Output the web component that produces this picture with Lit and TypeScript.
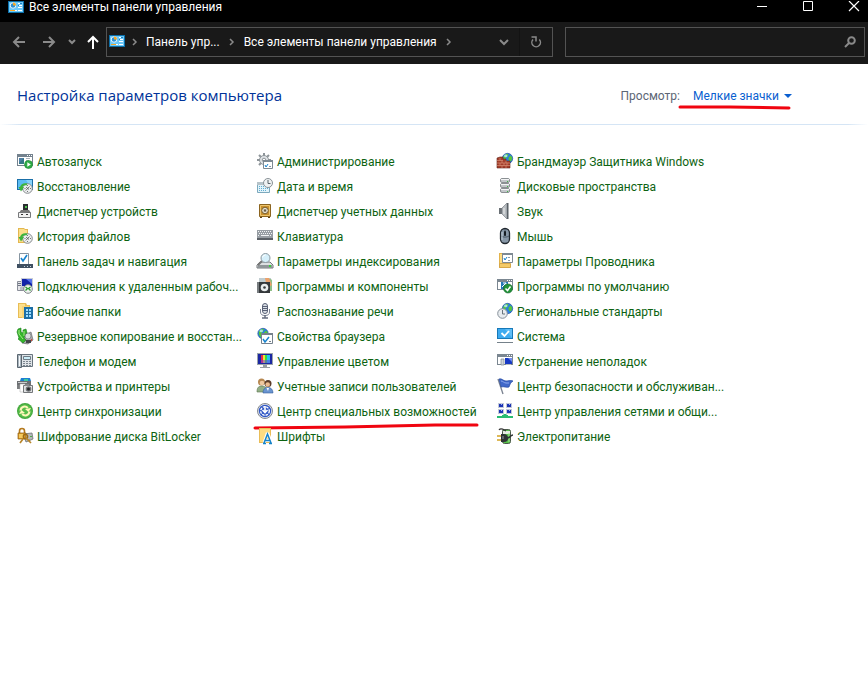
import { LitElement, html, svg, css, type SVGTemplateResult } from "lit";
import { customElement, property } from "lit/decorators.js";

const gear = svg`
  <g fill="none" stroke="#8d9499" stroke-width="2"><path d="M7 0v3M7 11v3M0 7h3M11 7h3M2 2l2 2M12 2l-2 2M2 12l2-2"/></g>
  <circle cx="7" cy="7" r="4.500" fill="#dfe3e6" stroke="#8d9499"/><circle cx="7" cy="7" r="1.800" fill="#fff" stroke="#8d9499"/>`;

const globe = (cx: number, cy: number, r: number) => svg`
  <circle cx=${cx} cy=${cy} r=${r} fill="#2b7fe0" stroke="#174a96" stroke-width=".6"/>
  <path transform="translate(${cx} ${cy}) scale(${r / 5})" fill="#54c83c" d="M-4-2-1-4.5 1-4 0-2-2 0-1 2-2 4-4 1ZM1-1 3-3 4.5-1 4 2 2 3 1 1Z"/>
  <ellipse cx=${cx - r / 3} cy=${cy - r / 2} rx=${r / 3} ry=${r / 4} fill="#bfeaff" opacity=".8"/>`;

const historyClock = svg`
  <circle cx="10.5" cy="10.5" r="4.8" fill="#eceff0" stroke="#858a8d"/>
  <path d="M10.5 7v1M10.5 13v1M7.5 10.5h1M13 10.5h1M8.7 12.5l3.8-4M9 9l3 2.5" stroke="#555" stroke-width=".8" fill="none"/>
  <path d="M10 6.5C6 5.500 4 8 4 10" stroke="#3db43c" stroke-width="2.200" fill="none"/><path d="M1.500 9h5.500l-3 4.500z" fill="#3db43c"/>`;

const plainWindow = svg`
  <path d="M0 1h16v11H0z" fill="#7b8791"/><path d="M1 4h14v7H1z" fill="#fff"/>
  <path d="M10 2h1v1h-1zM12 2h1v1h-1zM14 2h1v1h-1z" fill="#fff"/>`;

const icons: Record<string, SVGTemplateResult> = {
  panel: svg`
    <path d="M0 1h16v12H0z" fill="#0b6ea8"/><path d="M1 2h14v10H1z" fill="#6cc8f8"/>
    <circle cx="5" cy="5.500" r="3" fill="#fff"/><circle cx="5" cy="5.500" r="2.300" fill="#2a8fd4"/><path d="M5 5.500V2.500a3 3 0 0 1 3 3z" fill="#f6a623"/>
    <path d="M10 3h4v1h-4zM11 5h3v1h-3zM10 7h4v1h-4zM10 10h4v1h-4z" fill="#fff"/><path d="M12 3h2v1h-2zM10 5h1v1h-1z" fill="#1c7fc0"/>
    <path d="M2 10h5v1H2z" fill="#f6a623"/><path d="M7 10h2v1H7z" fill="#fff"/>`,
  autoplay: svg`
    <path d="M0 1h16v12H0z" fill="#74828e"/><path d="M1 4h14v8H1z" fill="#fff"/>
    <path d="M10 2h1v1h-1zM12 2h1v1h-1zM14 2h1v1h-1z" fill="#fff"/>
    <path d="M2 5h5v6H2z" fill="#347986"/><path d="M2 5h5L2 10z" fill="#507fa5"/>
    <path d="M9 5.500h4M9 7.500h3" stroke="#aab2b9"/>
    <circle cx="11.500" cy="11.500" r="4" fill="#2fae46" stroke="#1d8132" stroke-width=".6"/><path d="M10.300 9.300v4.400l3.500-2.200z" fill="#fff"/>`,
  recovery: svg`
    <path d="M0 1h16v11H0z" fill="#1a6fa8"/><path d="M1 2h14v9H1z" fill="#5bbcf3"/><path d="M9 2h6v9z" fill="#86d2fa"/>${historyClock}`,
  device: svg`
    <path d="M6 1h5v7H6z" fill="#2b2e30"/><path d="M8 3h2v2H8z" fill="#53c653"/>
    <path d="M4 7h8l2 3H2z" fill="#777"/><path d="M1.500 9.500h12v5h-12z" fill="#f1f1f1" stroke="#77797b"/>
    <path d="M4 11h2v1H4zM9 11h2v1H9z" fill="#333"/>`,
  history: svg`
    <path d="M1 0h6l1 1h3v14H1z" fill="#e3b750"/><path d="M2 1h5l1 1h2v12H2z" fill="#fbdf8a"/>${historyClock}`,
  taskbar: svg`
    <path d="M2.500.5h9v12h-9z" fill="#fff" stroke="#8795a1"/><path d="M0 11h16v4H0z" fill="#3f5062"/>
    <path d="M7 13h1v1H7zM10 13h1v1h-1zM13 13h1v1h-1z" fill="#c4d0da"/>
    <path d="M4 5l2 3 4-6" fill="none" stroke="#1683cf" stroke-width="1.600"/>`,
  remote: svg`
    <path d="M.5 3.500h6v9h-6z" fill="#e4e4e8" stroke="#8a8f99"/><path d="M1 5.500h3M1 7.500h3" stroke="#6d7482"/>
    <path d="M4 0h12v9H4z" fill="#c8ccd6"/><path d="M5 1h10v7H5z" fill="#1223a8"/><path d="M9 1h6v5z" fill="#5673e8"/>
    <path d="M3 9h7v3H3z" fill="#b9bdc8"/>
    <circle cx="11" cy="11" r="4.300" fill="#eef2ee" stroke="#80868a"/><path d="M8.500 9l2 1.500-2 2M13.500 9l-2 1.500 2 2" fill="none" stroke="#299b31" stroke-width="1.300"/>`,
  workfolders: svg`
    <path d="M1 0h8l1 2h3v13H1z" fill="#e8bd56"/><path d="M2 1h6v13H2z" fill="#fde08b"/><path d="M5 3h7v12H5z" fill="#f8d477"/>
    <path d="M7 4h9v12H7z" fill="#1c6ea5"/><path d="M9 6h2v2H9zM12 6h2v2h-2zM9 9h2v2H9zM12 9h2v2h-2zM9 12h2v2H9zM12 12h2v2h-2z" fill="#9bdcff"/>`,
  backup: svg`
    <path d="M6 8l8-4 2 8-5 4-6-1z" fill="#a8abad" stroke="#696c6e" stroke-width=".7"/><circle cx="11" cy="8" r="3" fill="#d9dcde" stroke="#77797b" stroke-width=".7"/>
    <path d="M9 12h5v3H9z" fill="#44474a"/><path d="M14 11h1v2h-1z" fill="#d74439"/>
    <path d="M1 1l3-1v4l2 1V2l3-1 1 4-2 1-1 4 2 2-3 3-5-4 1-1L1 7 0 4z" fill="#35b52c" stroke="#187a17" stroke-width=".6"/><path d="M2 2v4l4 5M7 3v5" stroke="#a4ed84" fill="none"/>`,
  phone: svg`
    <path d="M1.500 1.500h14v12h-14z" fill="#dfe4e8" stroke="#68747e"/><path d="M.5 1.500h4v13h-4z" fill="#a9b5be" stroke="#5a6670"/><path d="M2.500 3v10" stroke="#f5f8fa"/>
    <path d="M6.500 3.500h7v3h-7z" fill="#c9edf8" stroke="#6e7b85"/>
    <path d="M6 8.500h2M9 8.500h2M12 8.500h2M6 10.500h2M9 10.500h2M12 10.500h2M6 12.500h2M9 12.500h2M12 12.500h2" stroke="#7b858f"/>`,
  printers: svg`
    <path d="M4 0h9l1 3H3z" fill="#1d80d2"/><path d="M7 1h4v2H7z" fill="#40cb9a"/>
    <path d="M0 3h14v5H0z" fill="#6c6f72"/><path d="M1 4h9v1H1z" fill="#c8cbcd"/><path d="M0 7h3v4H0z" fill="#7b7e80"/><path d="M3 6h5v8H3z" fill="#fff" stroke="#aaa" stroke-width=".5"/>
    <path d="M6.500 7.500h9v7h-9z" fill="#dfe1e2" stroke="#74777a"/><path d="M8 6h4v2H8z" fill="#85888a"/><circle cx="11.500" cy="11" r="2.800" fill="#737679"/><circle cx="11.500" cy="11" r="1.500" fill="#26292c"/>`,
  sync: svg`
    <circle cx="8" cy="8" r="8" fill="#43a83c"/><circle cx="8" cy="8" r="6.800" fill="#58bd4b"/>
    <path d="M3.500 7.500C4 3.500 8.500 2.500 10.800 5M12.500 8.500C12 12.500 7.500 13.500 5.200 11" fill="none" stroke="#fff7ba" stroke-width="2"/>
    <path d="M14 5l-2.500 4L8 6zM2 11l2.500-4L8 10z" fill="#fff7ba"/>`,
  bitlocker: svg`
    <path d="M6 6l9-1 1 6-7 3z" fill="#b5b8bb" stroke="#6f7274" stroke-width=".8"/><path d="M13 8h2v1h-2z" fill="#4ca94a"/>
    <path d="M2.500 5V3a2.500 2.500 0 0 1 5 0v3" fill="none" stroke="#b57a1e" stroke-width="1.600"/>
    <path d="M1 5h8v6H1z" fill="#d99a28" stroke="#8c5d11" stroke-width=".7"/><path d="M2 6h4v4H2z" fill="#f5c95c"/>
    <circle cx="8.500" cy="8.500" r="2.200" fill="none" stroke="#9a6a16" stroke-width="1.300"/><path d="M9 10l5 5M6 11l-3 4M11 13l2-1" stroke="#b8862a" stroke-width="1.700"/>`,
  admin: svg`
    ${gear}<path d="M6.500 7.500h9v8h-9z" fill="#fff" stroke="#7d8993"/><path d="M6 7h10v2H6z" fill="#7d8993"/>
    <path d="M8 12l1 2 2-3" fill="none" stroke="#1683cf"/><path d="M12 13.500h2" stroke="#89a"/>`,
  date: svg`
    <path d="M.5 4.500h12v10H.5z" fill="#e2f3fa" stroke="#7ca9bd"/><path d="M0 4h13v3H0z" fill="#b6c3c9"/>
    <path d="M2 8.500h9M2 10.500h9M2 12.500h8" stroke="#61aed2" stroke-dasharray="1 1"/>
    <circle cx="11" cy="5" r="4.500" fill="#eef1f2" stroke="#899297"/><path d="M11 2v3.500h2.500" fill="none" stroke="#59646a"/>`,
  vault: svg`
    <path d="M2.500 1.500h11v12h-11z" fill="#c9902d" stroke="#8b6420"/><path d="M3.500 2.500h9v10h-9z" fill="none" stroke="#edc56d"/>
    <circle cx="8" cy="7.500" r="3.300" fill="#e9e3d2" stroke="#7a5d27"/><circle cx="8" cy="7.500" r="1.200" fill="#665b46"/><path d="M5.500 5l1.500 1.500M10.500 5 9 6.500M5.500 10 7 8.500M10.500 10 9 8.500" stroke="#8b7a57" stroke-width=".7"/>
    <path d="M3 14h2v1H3zM11 14h2v1h-2z" fill="#5c3f10"/>`,
  keyboard: svg`
    <path d="M0 2h16v10H0z" fill="#5b6066"/><path d="M0 2h16v8H0z" fill="#979da3"/>
    <path d="M1 3.500h14M2 5.500h13M1 7.500h2M13 7.500h2" stroke="#f2f4f5" stroke-dasharray="1 1"/><path d="M4 7.500h8" stroke="#f2f4f5"/>`,
  index: svg`
    <path d="M3 9h10l3 3v3H0v-3z" fill="#dcdfe1" stroke="#72777a"/><path d="M1 12h14v3H1z" fill="#8f9598"/><path d="M12 12h2v2h-2z" fill="#39d43a"/>
    <path d="M5 8l-4 4" stroke="#777" stroke-width="2"/><circle cx="8.500" cy="5" r="4.500" fill="#d5effa" stroke="#8b979e"/><path d="M5.500 4.500a3 3 0 0 1 3-2.500" fill="none" stroke="#fff"/>`,
  programs: svg`
    <path d="M2 0h12v8H2z" fill="#c0ccd0"/><path d="M9 1c4-1 7 0 6 3v9h-5z" fill="#8fbf88"/><path d="M8 0h4l3 7-5 3z" fill="#eba16b"/>
    <path d="M0 4h13v11H0z" fill="#34383b"/><path d="M0 4h2v11H0z" fill="#777c7f"/><circle cx="7.500" cy="9.500" r="3.800" fill="#e9eced"/><circle cx="7.500" cy="9.500" r="1.300" fill="#35393c"/>`,
  speech: svg`
    <rect x="5.500" y=".5" width="5" height="10" rx="2.500" fill="#d9dee5" stroke="#596176"/><path d="M6 3.500h4M6 5.500h4M6 7.500h4" stroke="#596176"/>
    <path d="M3.500 6v3a4.500 3.500 0 0 0 9 0V6" fill="none" stroke="#7a8294"/><path d="M8 12v3M5 15h6" stroke="#666e80" stroke-width="1.500"/>`,
  browser: svg`
    ${globe(6, 5.5, 5.2)}<path d="M4.500 5.500h11v10h-11z" fill="#fff" stroke="#75818c"/><path d="M4 5h12v2H4z" fill="#75818c"/><path d="M6 11l2 3 4-5" fill="none" stroke="#1683cf" stroke-width="1.500"/><path d="M12 13.500h2" stroke="#75818c"/>`,
  color: svg`
    <path d="M0 0h16v12H0z" fill="#9ba3a9"/><path d="M1 1h14v10H1z" fill="#1b27a2"/>
    <path d="M4 2h3v8H4z" fill="#e72d48"/><path d="M6 2h2v8H6z" fill="#efe637"/><path d="M8 2h2v8H8z" fill="#33db42"/><path d="M10 2h3v8h-3z" fill="#20c8ec"/><path d="M4 7h9v3H4z" fill="#7033e2" opacity=".5"/>
    <path d="M6 12h4v2h3v1H3v-1h3z" fill="#969ea3"/>`,
  users: svg`
    <circle cx="4.500" cy="4" r="3.500" fill="#b68750"/><circle cx="5" cy="5" r="2.300" fill="#f0c9a0"/><path d="M0 14c0-5 2-6 5-6s5 2 5 6z" fill="#91ae86" stroke="#5a744f" stroke-width=".6"/>
    <circle cx="11" cy="5.500" r="3.500" fill="#5b3c29"/><circle cx="10.700" cy="6.500" r="2.300" fill="#edbd91"/><path d="M6 15c0-4 2-5.500 5-5.500s5 2 5 5.500z" fill="#6994d0" stroke="#355f9b" stroke-width=".6"/><path d="M9.500 10h2.500l-1 3z" fill="#fff"/>`,
  access: svg`
    <circle cx="8" cy="8" r="7.500" fill="#dfe4ef" stroke="#85898f"/><circle cx="8" cy="8" r="6.200" fill="#3158c5"/>
    <circle cx="8" cy="8" r="4.300" fill="none" stroke="#fff" stroke-width="1.300" stroke-dasharray="2.500 1"/><path d="M8 3v6M5.500 7 8 9.500 10.500 7" fill="none" stroke="#fff" stroke-width="1.600"/>`,
  fonts: svg`
    <path d="M2 0h12v15H2z" fill="#e9bd58"/><path d="M3 1h10v13H3z" fill="#ffdc80"/><path d="M7 15 10 6h1l4 9M8 12.500h5" fill="none" stroke="#fff" stroke-width="3"/>
    <path d="M7 15 10.500 6 14 15M8 12.500h5M6 15.500h3M12 15.500h3" fill="none" stroke="#1683c9" stroke-width="1.500"/>`,
  firewall: svg`
    ${globe(10.500, 5.500, 5.2)}<path d="M0 5l3-1h3v2h3v2h4v7H0z" fill="#a43e2b" stroke="#63251b" stroke-width=".6"/>
    <path d="M0 7.500h6M0 10h13M0 12.500h13M3 5v2.500M5 7.500V10M9 7.500V10M3 10v2.500M7 10v2.500M10 10v2.500M5 12.500V15M9 12.500V15" stroke="#df9c82" stroke-width=".6" fill="none"/>`,
  disks: svg`
    ${[0, 5, 10].map((y) => svg`
      <rect x="3.500" y=${y + 0.5} width="9" height="4" rx="1.500" fill="#c3c7ca" stroke="#8b9093"/><path d="M4 ${y + 1.5}h8" stroke="#f3f4f5"/><path d="M10 ${y + 3}h1v1h-1z" fill="#3fbb44"/>`)}`,
  sound: svg`
    <path d="M2 5h3v6H2z" fill="#6a7075"/><path d="M5 5l5-5v16l-5-5z" fill="#b9bec2" stroke="#7c8388" stroke-width=".7"/><path d="M10 0h1.500v16H10z" fill="#596066"/><path d="M7 5v6" stroke="#eee"/>`,
  mouse: svg`
    <rect x="3.500" y=".5" width="9" height="15" rx="4.500" fill="#8797a7" stroke="#20272e" stroke-width="1.300"/><path d="M8 1v7M4 8c2 1.500 6 1.500 8 0" stroke="#4c5966" fill="none"/><rect x="7" y="3" width="2" height="5" rx="1" fill="#161c22"/><path d="M5 4v8" stroke="#c5d1dc"/>`,
  explorer: svg`
    <path d="M2 0h5v15H2z" fill="#e3b34b"/><path d="M3 1h10v13H3z" fill="#ffdc80"/><path d="M2.500 10.500h11v4h-11z" fill="#f4ca68" stroke="#d6a748"/>
    <path d="M5.500.5h10v9h-10z" fill="#fff" stroke="#7d8993"/><path d="M5 1h11" stroke="#7d8993" stroke-width="2"/><path d="M7 5l1 2 2-3" fill="none" stroke="#1683cf"/><path d="M11 4.500h2M11 7.500h2" stroke="#89a"/>`,
  defaults: svg`
    ${plainWindow}<path d="M4 4h7v7H4z" fill="#2678b8"/><path d="M9 5 5 9M6 5h3v3" stroke="#fff" fill="none"/>
    <circle cx="11" cy="10.500" r="4.500" fill="#23933a" stroke="#12652a" stroke-width=".6"/><path d="M8.500 10.500l2 2 3-4" fill="none" stroke="#fff" stroke-width="1.500"/>`,
  region: svg`
    ${globe(10.500, 5.500, 5.2)}<circle cx="5.500" cy="10.500" r="4.800" fill="#e8ecef" stroke="#858f98"/><path d="M5.500 7v4H8" fill="none" stroke="#69747c"/>`,
  system: svg`
    <path d="M0 0h16v11H0z" fill="#1779b8"/><path d="M1 1h14v9H1z" fill="#3daaf0"/><path d="M8 1h7v9z" fill="#5fbdf6"/>
    <path d="M4.500 5l3 3 4.500-5" fill="none" stroke="#fff" stroke-width="1.800"/><path d="M0 14h16v1H0z" fill="#75818a"/>`,
  trouble: svg`
    ${plainWindow}<path d="M8 5h7v6H8z" fill="#1739c4"/><path d="M11 5h4v4z" fill="#708cf0"/><path d="M4 6h3v6H4z" fill="#cfd4d9" stroke="#7b8791" stroke-width=".7"/><path d="M9 11h5v1H9z" fill="#b5bbc0"/>`,
  flag: svg`
    <path d="M1 1l5 15" stroke="#7a8290" stroke-width="1.300"/><path d="M2 1c3-1 4 2 7 2 2 0 4-1 7 0-2 1-3 3-4 6-3 1-5-1-8 0z" fill="#4068c9" stroke="#2347a0" stroke-width=".7"/><path d="M4 3c2 0 3 2 5 2h3" stroke="#8da9ef" fill="none"/>`,
  network: svg`
    ${[[1, 0], [9, 0], [1, 6], [9, 6]].map(([x, y]) => svg`
      <path d="M${x} ${y}h6v5h-6z" fill="#c3c9d8"/><path d="M${x + 1} ${y + 1}h4v3h-4z" fill="#1c34b4"/><path d="M${x + 3} ${y + 1}h1v1h-1z" fill="#9fb4ff"/>`)}
    <path d="M0 13h16v2H0z" fill="#28bd72"/><path d="M8 11v4M5 13.500h6" stroke="#28bd72" stroke-width="3"/>`,
  power: svg`
    <rect x="5.500" y="1.500" width="8" height="14" rx="2" fill="#58c04a" stroke="#4c5a4b"/><path d="M6 3h7v3H6z" fill="#e5ede2"/><path d="M12 5v9" stroke="#a5e694"/>
    <path d="M2 2c2-3 5 0 7 1" stroke="#333" fill="none" stroke-width="1.300"/>
    <path d="M0 8h5M0 12h5" stroke="#d2a322" stroke-width="1.500"/><path d="M4 6h3c5 0 6 8 0 8H4z" fill="#2e3435"/><path d="M10 10c4 0 3-3 6-3" stroke="#2e3435" stroke-width="1.500" fill="none"/><path d="M6 8v3" stroke="#939b9b"/>`,
};

const applets: [string, string][] = [
  ["autoplay", "Автозапуск"],
  ["admin", "Администрирование"],
  ["firewall", "Брандмауэр Защитника Windows"],
  ["recovery", "Восстановление"],
  ["date", "Дата и время"],
  ["disks", "Дисковые пространства"],
  ["device", "Диспетчер устройств"],
  ["vault", "Диспетчер учетных данных"],
  ["sound", "Звук"],
  ["history", "История файлов"],
  ["keyboard", "Клавиатура"],
  ["mouse", "Мышь"],
  ["taskbar", "Панель задач и навигация"],
  ["index", "Параметры индексирования"],
  ["explorer", "Параметры Проводника"],
  ["remote", "Подключения к удаленным рабоч..."],
  ["programs", "Программы и компоненты"],
  ["defaults", "Программы по умолчанию"],
  ["workfolders", "Рабочие папки"],
  ["speech", "Распознавание речи"],
  ["region", "Региональные стандарты"],
  ["backup", "Резервное копирование и восстан..."],
  ["browser", "Свойства браузера"],
  ["system", "Система"],
  ["phone", "Телефон и модем"],
  ["color", "Управление цветом"],
  ["trouble", "Устранение неполадок"],
  ["printers", "Устройства и принтеры"],
  ["users", "Учетные записи пользователей"],
  ["flag", "Центр безопасности и обслуживан..."],
  ["sync", "Центр синхронизации"],
  ["access", "Центр специальных возможностей"],
  ["network", "Центр управления сетями и общи..."],
  ["bitlocker", "Шифрование диска BitLocker"],
  ["fonts", "Шрифты"],
  ["power", "Электропитание"],
];

@customElement("applet-icon")
export class AppletIcon extends LitElement {
  @property() name = "";
  static styles = css`
    :host { display: block; flex: none; width: 16px; height: 16px; }
    svg { display: block; overflow: visible; }
  `;
  render() {
    return html`<svg width="16" height="16" viewBox="0 0 16 16" aria-hidden="true">${icons[this.name]}</svg>`;
  }
}

@customElement("window-bar")
export class WindowBar extends LitElement {
  static styles = css`
    :host { display: flex; align-items: flex-start; height: 22px; background: #000; color: #fff; overflow: hidden; }
    .name { display: flex; flex: 1; gap: 5px; padding-left: 8px; font-size: 12px; line-height: 14px; font-weight: 400; margin: 0; white-space: nowrap; }
    button { width: 46px; height: 14px; padding: 0; border: 0; background: none; display: grid; place-items: center; }
    .controls { display: flex; margin-right: -9px; }
    svg { display: block; }
  `;
  render() {
    return html`
      <h1 class="name"><applet-icon name="panel"></applet-icon>Все элементы панели управления</h1>
      <div class="controls">
        <button aria-label="Свернуть"><svg width="12" height="12"><path d="M1 5.500h10" stroke="#fff"/></svg></button>
        <button aria-label="Развернуть"><svg width="12" height="12"><path d="M1.500.5h9v9h-9z" fill="none" stroke="#fff"/></svg></button>
        <button aria-label="Закрыть"><svg width="12" height="12"><path d="M1 0l10 10M11 0 1 10" stroke="#fff" stroke-width="1.200"/></svg></button>
      </div>`;
  }
}

@customElement("nav-bar")
export class NavBar extends LitElement {
  static styles = css`
    :host { display: flex; height: 42px; box-sizing: border-box; padding: 5px 3px 7px 4px; background: #191919; gap: 12px; }
    .left { display: flex; flex: 3; min-width: 0; }
    button { padding: 0; border: 0; background: none; color: inherit; font: inherit; display: grid; place-items: center; flex: none; }
    svg { display: block; fill: none; stroke: #8a8a8a; stroke-width: 2; }
    .step { width: 30px; }
    .recent { width: 16px; }
    .up { width: 26px; }
    .up svg { stroke: #fff; }
    .address { display: flex; flex: 1; min-width: 0; border: 1px solid #535353; }
    .crumbs { display: flex; flex: 1; align-items: center; padding-left: 2px; color: #fff; font-size: 12px; white-space: nowrap; min-width: 0; }
    .chev { width: 18px; height: 28px; }
    .crumbs svg { stroke-width: 1.500; }
    .drop { width: 30px; }
    .refresh { width: 33px; border-left: 1px solid #131313; }
    .search { display: flex; flex: none; width: 35%; max-width: 300px; box-sizing: border-box; border: 1px solid #535353; }
    input { flex: 1; min-width: 0; border: 0; background: none; color: #fff; outline: 0; font: inherit; }
    .find { width: 28px; }
    .crumb { margin: 0 3px; }
  `;
  render() {
    const chev = svg`<path d="M2 1l3 3-3 3"/>`;
    return html`
      <div class="left">
        <button class="step" aria-label="Назад"><svg width="14" height="12"><path d="M13 6H2M7 1 2 6l5 5"/></svg></button>
        <button class="step" aria-label="Вперед"><svg width="14" height="12"><path d="M1 6h11M7 1l5 5-5 5"/></svg></button>
        <button class="recent" aria-label="Последние расположения"><svg width="8" height="6"><path d="M1 1l3 3 3-3"/></svg></button>
        <button class="up" aria-label="Вверх"><svg width="12" height="14"><path d="M6 14V2M1 7l5-5 5 5"/></svg></button>
        <div class="address">
          <div class="crumbs">
            <applet-icon name="panel"></applet-icon>
            <button class="chev" aria-label="Разделы"><svg width="7" height="8">${chev}</svg></button>
            <button class="crumb">Панель упр...</button>
            <button class="chev" aria-label="Разделы"><svg width="7" height="8">${chev}</svg></button>
            <button class="crumb">Все элементы панели управления</button>
            <button class="chev" aria-label="Разделы"><svg width="7" height="8">${chev}</svg></button>
          </div>
          <button class="drop" aria-label="Журнал адресов"><svg width="10" height="7"><path d="M1 1l4 4 4-4"/></svg></button>
          <button class="refresh" aria-label="Обновить"><svg width="12" height="12"><path d="M9.300 3.500A4.300 4.300 0 1 1 3 3.500M1.500 1H6v4.500" stroke-width="1.500"/></svg></button>
        </div>
      </div>
      <div class="search">
        <input type="text" aria-label="Поиск">
        <button class="find" aria-label="Найти"><svg width="12" height="12"><circle cx="7.500" cy="4.500" r="3.300"/><path d="M5 7l-4 4"/></svg></button>
      </div>`;
  }
}

@customElement("app-root")
export class AppRoot extends LitElement {
  static styles = css`
    :host { display: block; min-height: 100vh; background: #fff; font-family: Roboto, "Noto Sans", sans-serif; font-size: 12px; }
    header { display: flex; align-items: center; justify-content: space-between; height: 60px; padding: 0 76px 0 17px; }
    h2 { margin: 0; font-family: "Open Sans", "Noto Sans", sans-serif; font-size: 15px; line-height: 24px; font-weight: 400; color: #003399; white-space: nowrap; padding-top: 2px; }
    .view { display: flex; align-items: center; gap: 13px; color: #5c6675; white-space: nowrap; padding-top: 4px; }
    .mode { position: relative; display: flex; align-items: center; gap: 5px; padding: 0; border: 0; background: none; font: inherit; color: #0a5fd0; }
    .rule { height: 1px; margin: 0; border: 0; background: linear-gradient(90deg, #fff, #d5e5f5 20px, #d5e5f5 calc(100% - 20px), #fff); }
    ul { display: grid; grid-template-columns: repeat(auto-fill, 240px); row-gap: 9px; margin: 0; padding: 28px 0 28px 17px; list-style: none; }
    li { display: flex; }
    a { position: relative; display: flex; gap: 4px; height: 16px; line-height: 18px; color: #0d6311; text-decoration: none; white-space: nowrap; }
    .mark { position: absolute; overflow: visible; pointer-events: none; fill: none; stroke: #f00510; stroke-width: 3; stroke-linecap: round; }
    .mode .mark { right: 1px; top: 16px; }
    a .mark { left: -3px; top: 18px; }
  `;
  render() {
    return html`
      <window-bar></window-bar>
      <nav-bar></nav-bar>
      <main>
        <header>
          <h2>Настройка параметров компьютера</h2>
          <div class="view">
            <span id="view-label">Просмотр:</span>
            <button class="mode" aria-labelledby="view-label mode-name">
              <span id="mode-name">Мелкие значки</span>
              <svg width="8" height="4" aria-hidden="true"><path d="M0 0h8L4 4z" fill="#0a5fd0"/></svg>
              <svg class="mark" width="112" height="4" aria-hidden="true"><path d="M1 2l50 0 59 1"/></svg>
            </button>
          </div>
        </header>
        <hr class="rule">
        <ul>
          ${applets.map(([icon, label]) => html`
            <li><a href="#${icon}"><applet-icon name=${icon}></applet-icon>${label}${icon === "access"
              ? html`<svg class="mark" width="224" height="8" aria-hidden="true"><path d="M1 7l90-1 90-2 42 0"/></svg>` : ""}</a></li>`)}
        </ul>
      </main>`;
  }
}
